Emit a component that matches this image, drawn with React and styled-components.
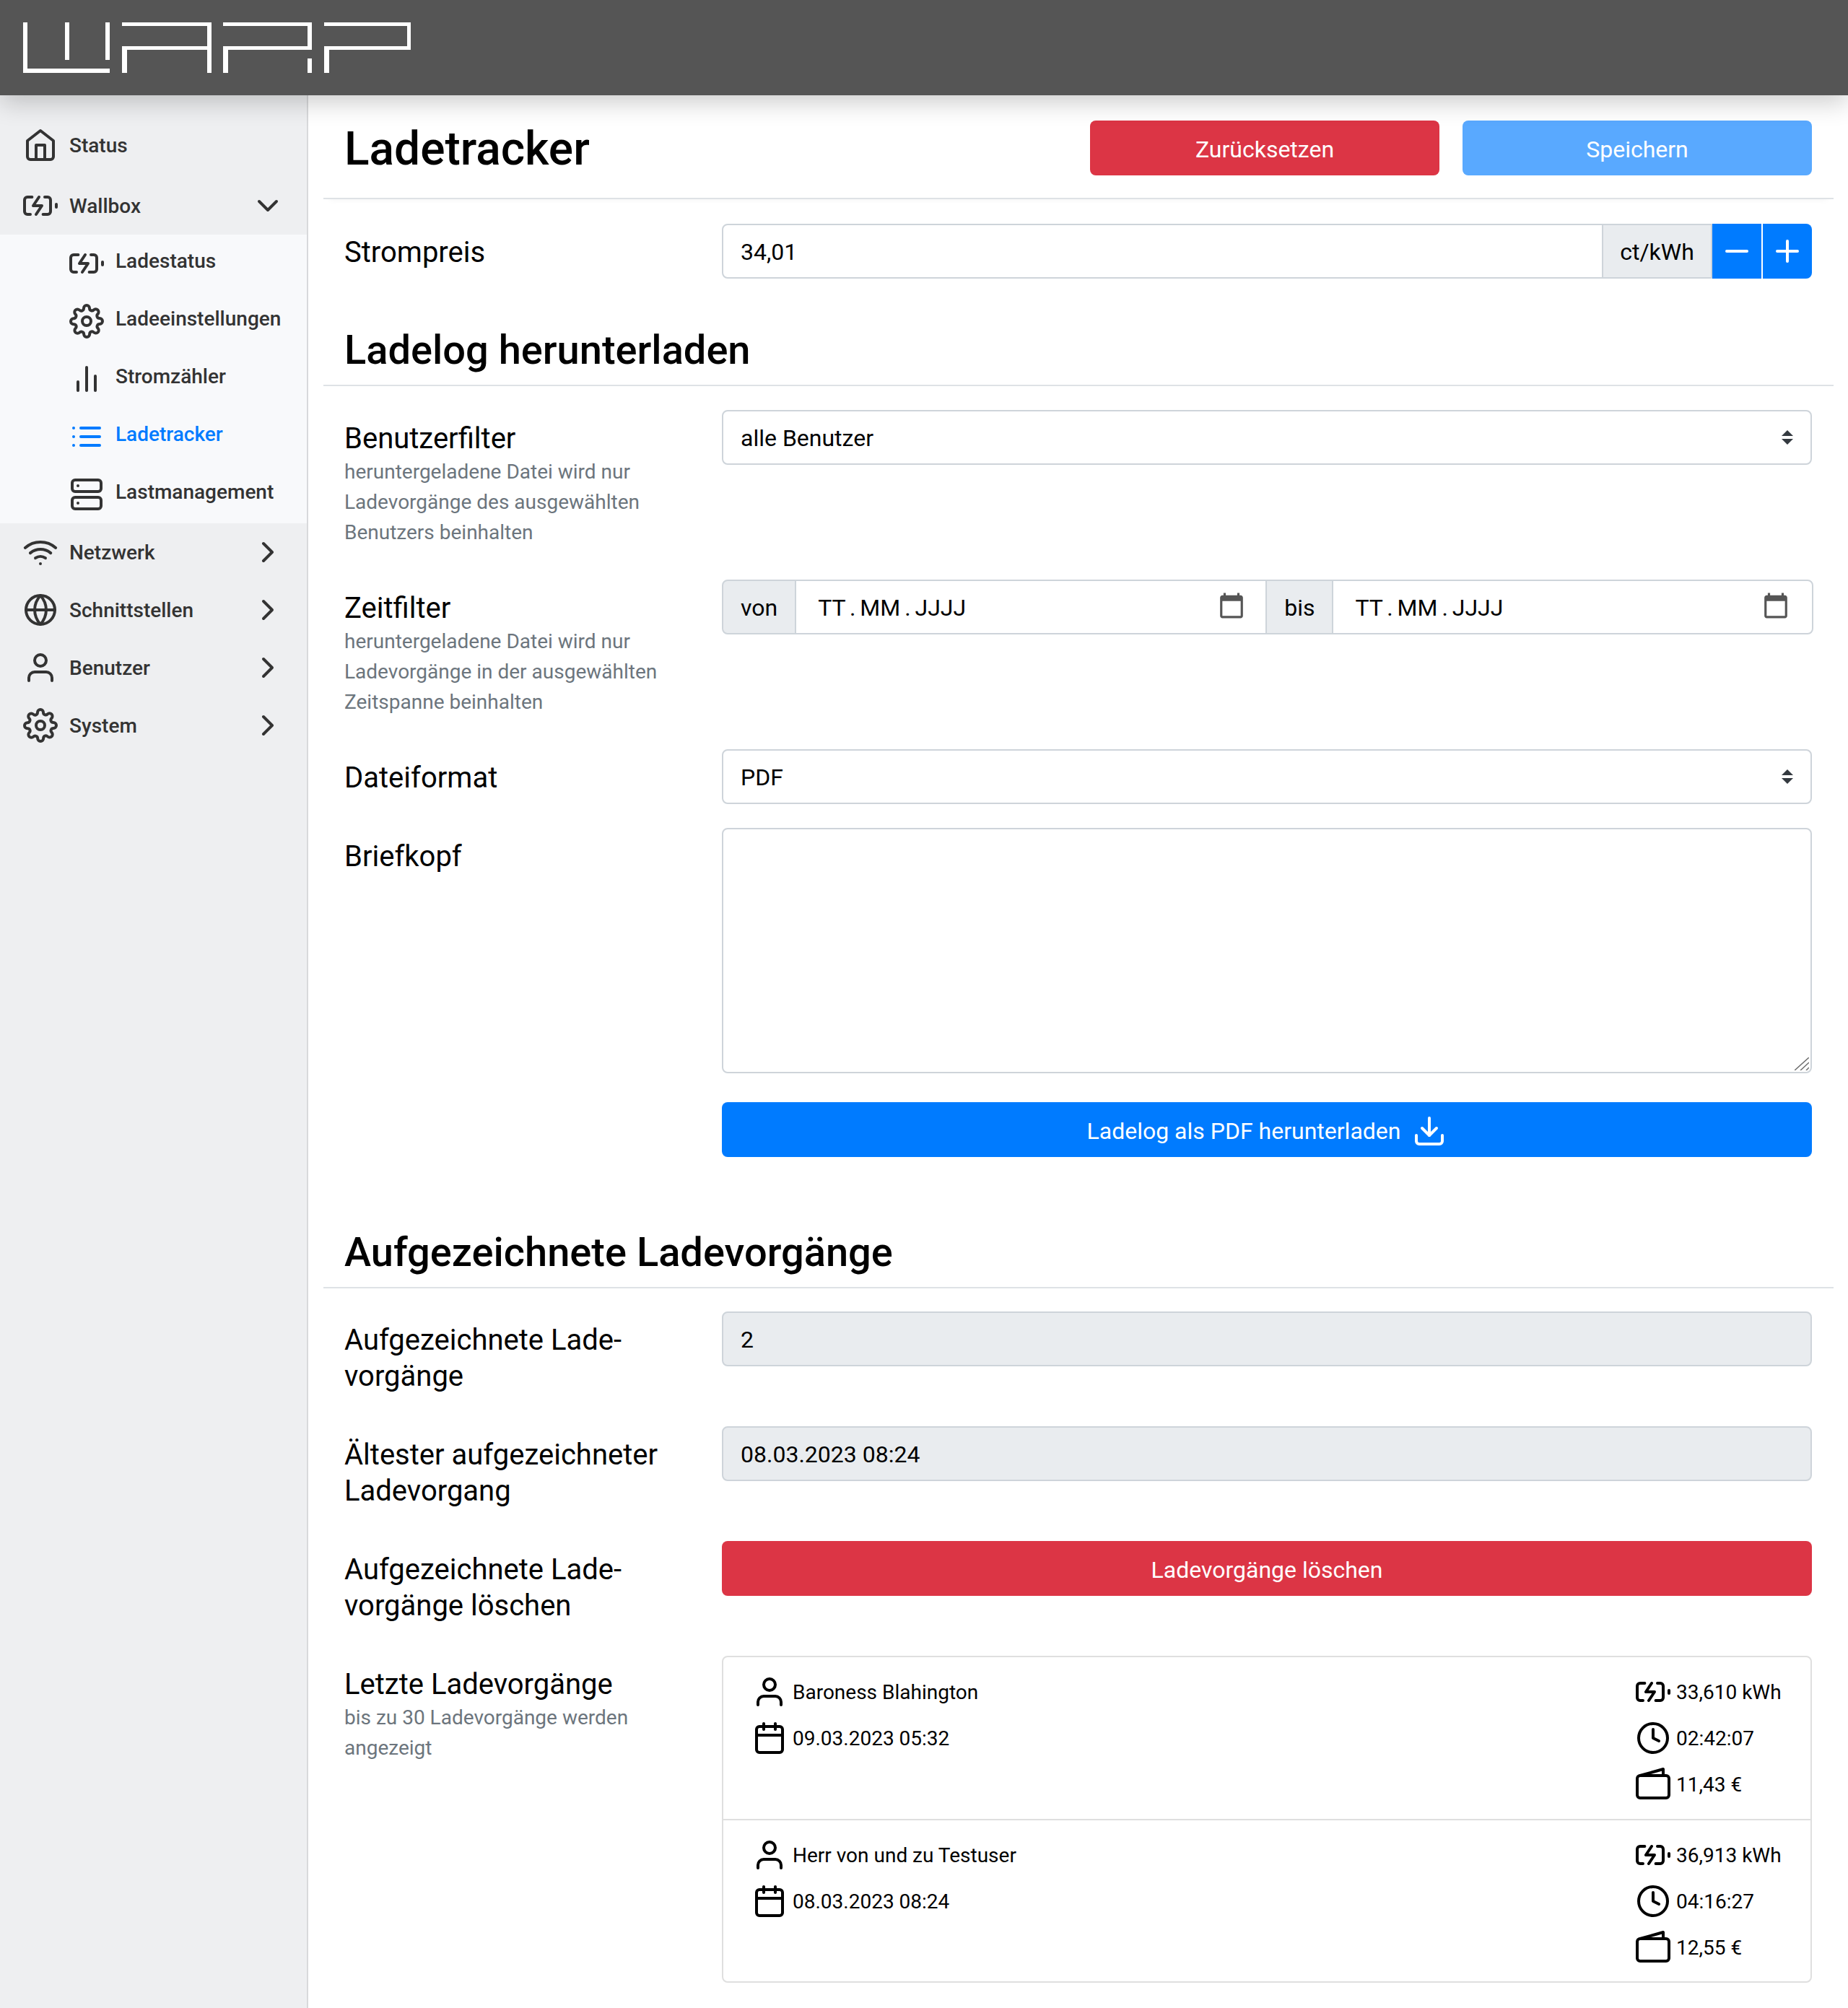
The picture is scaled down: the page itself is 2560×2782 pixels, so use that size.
import React from "react";
import styled, { createGlobalStyle } from "styled-components";
import {
  FiHome,
  FiBatteryCharging,
  FiSettings,
  FiBarChart2,
  FiList,
  FiServer,
  FiWifi,
  FiGlobe,
  FiUser,
  FiChevronDown,
  FiChevronRight,
  FiMinus,
  FiPlus,
  FiDownload,
  FiCalendar,
  FiClock,
} from "react-icons/fi";

const GlobalStyle = createGlobalStyle`
  html, body {
    margin: 0;
    padding: 0;
    background: #fff;
    font-family: Roboto, "Liberation Sans", sans-serif;
    font-size: 32px;
    color: #000;
  }
  * { box-sizing: border-box; }
`;

const Navbar = styled.header`
  position: relative;
  z-index: 2;
  height: 132px;
  background: #555;
  box-shadow: 0 10px 32px rgba(0, 0, 0, 0.2);
  padding: 31px 0 0 32px;
`;

const Shell = styled.div`
  display: flex;
  align-items: stretch;
  height: 2650px;
`;

const Sidebar = styled.nav`
  width: 427px;
  flex: none;
  background: #eeeff1;
  border-right: 2px solid #d8d9db;
  padding-top: 29px;
`;

const NavItem = styled.div`
  display: flex;
  align-items: center;
  height: 80px;
  padding-left: ${(p) => (p.$sub ? "96px" : "32px")};
  padding-right: 30px;
  margin-bottom: ${(p) => (p.$gap ? "4px" : "0")};
  gap: 16px;
  font-size: 28px;
  font-weight: 500;
  color: ${(p) => (p.$active ? "#007bff" : "#333")};
  svg { flex: none; }
  span {
    flex: 1;
    white-space: nowrap;
    margin-bottom: ${(p) => (p.$sub ? "7px" : "0")};
  }
`;

const SubMenu = styled.div`
  background: #f8f9fb;
  height: 400px;
`;

const Main = styled.main`
  flex: 1;
  padding: 0 20px 0 21px;
`;

const TitleBar = styled.div`
  display: flex;
  align-items: center;
  height: 144px;
  padding: 4px 30px 0 29px;
  border-bottom: 2px solid #dee2e6;
  box-shadow: 0 8px 8px -8px rgba(0, 0, 0, 0.06);
  margin-bottom: 34px;
`;

const Title = styled.h1`
  flex: 1;
  margin: 0;
  padding-top: 3px;
  font-size: 64px;
  font-weight: 500;
  line-height: 77px;
`;

const Button = styled.button`
  display: flex;
  align-items: center;
  justify-content: center;
  gap: 16px;
  width: ${(p) => p.$width || "100%"};
  height: 76px;
  margin-left: ${(p) => p.$offset || "0"};
  padding: 3px 0 0;
  border: 0;
  border-radius: 8px;
  font: inherit;
  color: #fff;
  background: ${(p) => (p.$danger ? "#dc3545" : p.$muted ? "#59a9ff" : "#007bff")};
`;

const Section = styled.h2`
  margin: ${(p) => p.$top} 0 ${(p) => p.$bottom};
  padding: 0 30px 14px 29px;
  border-bottom: 2px solid #dee2e6;
  font-size: 56px;
  font-weight: 500;
  line-height: 67px;
`;

const Row = styled.div`
  display: flex;
  padding: 0 30px 0 29px;
  margin-bottom: ${(p) => p.$mb || "32px"};
`;

const LabelCol = styled.div`
  width: 523px;
  flex: none;
  padding: 15px 30px 12px 0;
`;

const Label = styled.div`
  font-size: 40px;
  line-height: 50px;
  white-space: nowrap;
`;

const Hint = styled.div`
  font-size: 28px;
  line-height: 42px;
  color: #6c757d;
`;

const ValueCol = styled.div`
  flex: 1;
  min-width: 0;
`;

const Group = styled.div`
  display: flex;
  height: 76px;
`;

const DateGroup = styled(Group)`
  margin-right: -2px;
`;

const Addon = styled.div`
  display: flex;
  align-items: center;
  justify-content: center;
  width: ${(p) => p.$width || "auto"};
  padding: 2px 24px 0;
  flex: none;
  background: #e9ecef;
  border: 2px solid #ced4da;
  border-radius: ${(p) => p.$radius || "0"};
  margin-left: ${(p) => (p.$first ? "0" : "-2px")};
`;

const Input = styled.input`
  display: block;
  flex: 1;
  width: 100%;
  min-width: 0;
  height: 76px;
  padding: 2px 24px 0;
  border: 2px solid #ced4da;
  border-radius: ${(p) => p.$radius || "8px"};
  font: inherit;
  color: #000;
  background: ${(p) => (p.$readonly ? "#e9ecef" : "#fff")};
  outline: none;
`;

const StepButton = styled.button`
  display: flex;
  align-items: center;
  justify-content: center;
  width: 68px;
  height: 76px;
  flex: none;
  margin-left: ${(p) => (p.$right ? "2px" : "0")};
  padding: 0;
  border: 0;
  border-radius: ${(p) => (p.$right ? "0 8px 8px 0" : "0")};
  color: #fff;
  background: #007bff;
`;

const SelectBox = styled.div`
  display: flex;
  align-items: center;
  justify-content: space-between;
  height: 76px;
  padding: 2px 24px 0;
  border: 2px solid #ced4da;
  border-radius: 8px;
  svg { margin-top: -2px; }
`;

const DateBox = styled.div`
  display: flex;
  align-items: center;
  justify-content: space-between;
  flex: ${(p) => p.$grow};
  min-width: 0;
  margin-left: -2px;
  height: 76px;
  padding: 2px ${(p) => p.$pad} 0 30px;
  border: 2px solid #ced4da;
  border-radius: ${(p) => p.$radius || "0"};
  word-spacing: -2px;
  svg { margin-top: -6px; }
`;

const AreaWrap = styled.div`
  position: relative;
  margin-bottom: 40px;
`;

const TextArea = styled.textarea`
  display: block;
  width: 100%;
  height: 340px;
  padding: 12px 24px;
  border: 2px solid #ced4da;
  border-radius: 8px;
  font: inherit;
  outline: none;
  resize: none;
`;

const Grip = styled.svg`
  position: absolute;
  right: 4px;
  bottom: 4px;
`;

const List = styled.div`
  border: 2px solid #dfdfdf;
  border-radius: 8px;
`;

const ListItem = styled.div`
  display: flex;
  justify-content: space-between;
  height: ${(p) => (p.$last ? "225px" : "224px")};
  padding: 16px 40px 0 40px;
  border-top: ${(p) => (p.$last ? "2px solid #dfdfdf" : "0")};
`;

const InfoCol = styled.div`
  display: flex;
  flex-direction: column;
  width: ${(p) => p.$width || "auto"};
`;

const Info = styled.div`
  display: flex;
  align-items: center;
  height: 64px;
  gap: ${(p) => p.$gap || "8px"};
  font-size: 28px;
  white-space: nowrap;
  svg { flex: none; }
`;

const LogoMark = () => (
  <svg width="538" height="70" viewBox="32 31 538 70" fill="#fff">
    <rect x="32" y="31" width="6" height="70" />
    <rect x="32" y="95" width="120" height="6" />
    <rect x="90" y="31" width="6" height="52" />
    <rect x="146" y="31" width="6" height="52" />
    <rect x="169" y="31" width="124" height="5" />
    <rect x="169" y="64" width="124" height="5" />
    <rect x="169" y="64" width="7" height="37" />
    <rect x="287" y="31" width="6" height="70" />
    <rect x="309" y="31" width="123" height="5" />
    <rect x="309" y="64" width="123" height="5" />
    <rect x="309" y="64" width="7" height="37" />
    <rect x="426" y="31" width="6" height="38" />
    <rect x="426" y="81" width="6" height="20" />
    <rect x="449" y="31" width="120" height="5" />
    <rect x="449" y="64" width="120" height="5" />
    <rect x="449" y="64" width="7" height="37" />
    <rect x="564" y="31" width="5" height="38" />
  </svg>
);

const WalletIcon = ({ size = 48 }) => (
  <svg width={size} height={size} viewBox="0 0 24 24" fill="none" stroke="currentColor" strokeWidth="2" strokeLinejoin="round" strokeLinecap="round">
    <rect x="1" y="6" width="22" height="15.5" rx="2" />
    <path d="M3 6l16-4.5V6" />
  </svg>
);

const PickerIcon = () => (
  <svg width="38" height="38" viewBox="0 0 24 24" fill="#555">
    <path d="M20 3h-1V1h-2v2H7V1H5v2H4c-1.1 0-2 .9-2 2v16c0 1.1.9 2 2 2h16c1.1 0 2-.9 2-2V5c0-1.1-.9-2-2-2zm0 18H4V8h16v13z" />
  </svg>
);

const SelectArrows = () => (
  <svg width="16" height="20" viewBox="0 0 4 5" fill="#343a40">
    <path d="M2 0L0 2h4zm0 5L0 3h4z" />
  </svg>
);

const GripLines = () => (
  <Grip width="20" height="18" viewBox="0 0 20 18" stroke="#6f6f6f" strokeWidth="1.5">
    <path d="M0 18L20 0M8 18L20 7M16 18l4-4" />
  </Grip>
);

const sessions = [
  { user: "Baroness Blahington", date: "09.03.2023 05:32", energy: "33,610 kWh", time: "02:42:07", cost: "11,43 €" },
  { user: "Herr von und zu Testuser", date: "08.03.2023 08:24", energy: "36,913 kWh", time: "04:16:27", cost: "12,55 €" },
];

const App = () => {
  return (
    <>
      <GlobalStyle />
      <Navbar>
        <LogoMark />
      </Navbar>
      <Shell>
        <Sidebar>
          <NavItem $gap>
            <FiHome size={48} />
            <span>Status</span>
          </NavItem>
          <NavItem>
            <FiBatteryCharging size={48} />
            <span>Wallbox</span>
            <FiChevronDown size={48} />
          </NavItem>
          <SubMenu>
            <NavItem $sub>
              <FiBatteryCharging size={48} />
              <span>Ladestatus</span>
            </NavItem>
            <NavItem $sub>
              <FiSettings size={48} />
              <span>Ladeeinstellungen</span>
            </NavItem>
            <NavItem $sub>
              <FiBarChart2 size={48} />
              <span>Stromzähler</span>
            </NavItem>
            <NavItem $sub $active>
              <FiList size={48} />
              <span>Ladetracker</span>
            </NavItem>
            <NavItem $sub>
              <FiServer size={48} />
              <span>Lastmanagement</span>
            </NavItem>
          </SubMenu>
          <NavItem>
            <FiWifi size={48} />
            <span>Netzwerk</span>
            <FiChevronRight size={48} />
          </NavItem>
          <NavItem>
            <FiGlobe size={48} />
            <span>Schnittstellen</span>
            <FiChevronRight size={48} />
          </NavItem>
          <NavItem>
            <FiUser size={48} />
            <span>Benutzer</span>
            <FiChevronRight size={48} />
          </NavItem>
          <NavItem>
            <FiSettings size={48} />
            <span>System</span>
            <FiChevronRight size={48} />
          </NavItem>
        </Sidebar>
        <Main>
          <TitleBar>
            <Title>Ladetracker</Title>
            <Button $danger $width="484px">Zurücksetzen</Button>
            <Button $muted $width="484px" $offset="32px">Speichern</Button>
          </TitleBar>

          <Row $mb="0">
            <LabelCol>
              <Label>Strompreis</Label>
            </LabelCol>
            <ValueCol>
              <Group>
                <Input readOnly value="34,01" $radius="8px 0 0 8px" />
                <Addon $width="153px">ct/kWh</Addon>
                <StepButton><FiMinus size={48} /></StepButton>
                <StepButton $right><FiPlus size={48} /></StepButton>
              </Group>
            </ValueCol>
          </Row>

          <Section $top="65px" $bottom="33px">Ladelog herunterladen</Section>

          <Row>
            <LabelCol>
              <Label>Benutzerfilter</Label>
              <Hint>heruntergeladene Datei wird nur Ladevorgänge des ausgewählten Benutzers beinhalten</Hint>
            </LabelCol>
            <ValueCol>
              <SelectBox>
                alle Benutzer
                <SelectArrows />
              </SelectBox>
            </ValueCol>
          </Row>

          <Row>
            <LabelCol>
              <Label>Zeitfilter</Label>
              <Hint>heruntergeladene Datei wird nur Ladevorgänge in der ausgewählten Zeitspanne beinhalten</Hint>
            </LabelCol>
            <ValueCol>
              <DateGroup>
                <Addon $first $radius="8px 0 0 8px">von</Addon>
                <DateBox $grow="0 0 654px" $pad="28px">
                  TT . MM . JJJJ
                  <PickerIcon />
                </DateBox>
                <Addon>bis</Addon>
                <DateBox $grow="1" $pad="31px" $radius="0 8px 8px 0">
                  TT . MM . JJJJ
                  <PickerIcon />
                </DateBox>
              </DateGroup>
            </ValueCol>
          </Row>

          <Row>
            <LabelCol>
              <Label>Dateiformat</Label>
            </LabelCol>
            <ValueCol>
              <SelectBox>
                PDF
                <SelectArrows />
              </SelectBox>
            </ValueCol>
          </Row>

          <Row $mb="0">
            <LabelCol>
              <Label>Briefkopf</Label>
            </LabelCol>
            <ValueCol>
              <AreaWrap>
                <TextArea />
                <GripLines />
              </AreaWrap>
              <Button>
                Ladelog als PDF herunterladen
                <FiDownload size={48} />
              </Button>
            </ValueCol>
          </Row>

          <Section $top="99px" $bottom="32px">Aufgezeichnete Ladevorgänge</Section>

          <Row>
            <LabelCol>
              <Label>Aufgezeichnete Lade-<br />vorgänge</Label>
            </LabelCol>
            <ValueCol>
              <Input readOnly $readonly value="2" />
            </ValueCol>
          </Row>

          <Row>
            <LabelCol>
              <Label>Ältester aufgezeichneter<br />Ladevorgang</Label>
            </LabelCol>
            <ValueCol>
              <Input readOnly $readonly value="08.03.2023 08:24" />
            </ValueCol>
          </Row>

          <Row>
            <LabelCol>
              <Label>Aufgezeichnete Lade-<br />vorgänge löschen</Label>
            </LabelCol>
            <ValueCol>
              <Button $danger>Ladevorgänge löschen</Button>
            </ValueCol>
          </Row>

          <Row $mb="0">
            <LabelCol>
              <Label>Letzte Ladevorgänge</Label>
              <Hint>bis zu 30 Ladevorgänge werden angezeigt</Hint>
            </LabelCol>
            <ValueCol>
              <List>
                {sessions.map((s, i) => (
                  <ListItem key={s.user} $last={i === 1}>
                    <InfoCol>
                      <Info><FiUser size={48} />{s.user}</Info>
                      <Info><FiCalendar size={48} />{s.date}</Info>
                    </InfoCol>
                    <InfoCol $width="202px">
                      <Info $gap="8px"><FiBatteryCharging size={48} />{s.energy}</Info>
                      <Info $gap="8px"><FiClock size={48} />{s.time}</Info>
                      <Info $gap="8px"><WalletIcon />{s.cost}</Info>
                    </InfoCol>
                  </ListItem>
                ))}
              </List>
            </ValueCol>
          </Row>
        </Main>
      </Shell>
    </>
  );
};

export default App;
